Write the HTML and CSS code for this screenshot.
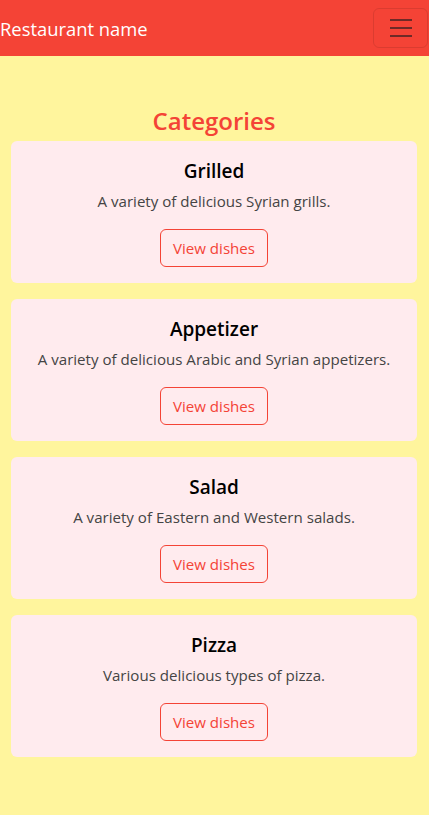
FILE: index.html
```html
<!DOCTYPE html>
<html lang="en">
<head>
<meta charset="utf-8">
<title>Restaurant</title>
<link rel="stylesheet" href="styles.css">
</head>
<body>
<nav class="navbar">
  <span class="brand">Restaurant name</span>
  <button class="toggler" aria-label="Menu">
    <svg width="30" height="30" viewBox="0 0 30 30"><path d="M4 7h22M4 15h22M4 23h22" stroke="#6e2a27" stroke-width="2"/></svg>
  </button>
</nav>
<main class="content">
  <h2 class="heading">Categories</h2>
  <section class="card">
    <h5 class="card-title">Grilled</h5>
    <p class="card-text">A variety of delicious Syrian grills.</p>
    <a class="btn" href="#">View dishes</a>
  </section>
  <section class="card">
    <h5 class="card-title">Appetizer</h5>
    <p class="card-text">A variety of delicious Arabic and Syrian appetizers.</p>
    <a class="btn" href="#">View dishes</a>
  </section>
  <section class="card">
    <h5 class="card-title">Salad</h5>
    <p class="card-text">A variety of Eastern and Western salads.</p>
    <a class="btn" href="#">View dishes</a>
  </section>
  <section class="card">
    <h5 class="card-title">Pizza</h5>
    <p class="card-text">Various delicious types of pizza.</p>
    <a class="btn" href="#">View dishes</a>
  </section>
</main>
</body>
</html>
```
FILE: styles.css
```css
* { box-sizing: border-box; }
html, body { margin: 0; padding: 0; }
body {
  background: #fff59d;
  font-family: "Open Sans", "Noto Sans", sans-serif;
  font-size: 15.1px;
  line-height: 1.5;
  color: #212529;
  min-height: 815px;
}
.navbar {
  height: 56px;
  background: #f44336;
  display: flex;
  align-items: center;
  justify-content: space-between;
  padding: 0 1px 0 0;
}
.brand {
  color: #fff;
  font-size: 18.4px;
  line-height: 30px;
  padding-top: 2px;
}
.toggler {
  width: 55px;
  height: 40px;
  margin-top: -1px;
  background: transparent;
  border: 1px solid rgba(0,0,0,0.1);
  border-radius: 6px;
  display: flex;
  align-items: center;
  justify-content: center;
  padding: 0;
}
.toggler svg { display: block; }
.content {
  padding: 50px 12px 40px 11px;
  display: flex;
  flex-direction: column;
  gap: 16px;
}
.heading {
  margin: 0 0 -11px;
  text-align: center;
  color: #f44336;
  font-size: 24px;
  font-weight: 600;
  line-height: 30px;
}
.card {
  background: #ffebee;
  border-radius: 6px;
  padding: 18px 16px 16px;
  display: flex;
  flex-direction: column;
  align-items: center;
  text-align: center;
}
.card-title {
  margin: 0 0 6px;
  font-size: 19px;
  font-weight: 600;
  line-height: 24px;
  color: #000;
}
.card-text {
  margin: 0 0 16px;
  color: #444;
  line-height: 24px;
}
.btn {
  display: inline-block;
  padding: 6px 12px;
  border: 1px solid #f44336;
  border-radius: 6px;
  color: #f44336;
  text-decoration: none;
  line-height: 24px;
}
```
